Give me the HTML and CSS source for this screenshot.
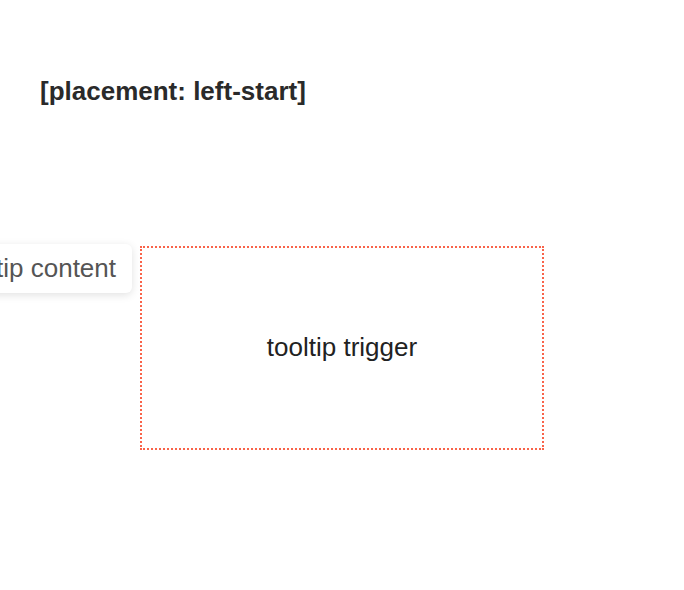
FILE: index.html
```html
<!DOCTYPE html>
<html lang="en">
<head>
<meta charset="utf-8">
<title>Tooltip placement</title>
<link rel="stylesheet" href="styles.css">
</head>
<body>
<main class="page">
  <h1 class="title">[placement: left-start]</h1>
  <div class="stage">
    <div class="trigger">
      <span class="trigger-label">tooltip trigger</span>
      <div class="tooltip">tooltip content</div>
    </div>
  </div>
</main>
</body>
</html>
```
FILE: styles.css
```css
html, body {
  margin: 0;
  padding: 0;
  background: #ffffff;
}

body {
  font-family: "Liberation Sans", Arial, sans-serif;
  color: #222222;
  overflow: hidden;
}

.page {
  padding: 76px 40px 0;
}

.title {
  margin: 0;
  font-size: 26px;
  line-height: 30px;
  font-weight: bold;
  color: #2a2a2a;
}

.stage {
  display: flex;
  justify-content: center;
  margin: 140px -40px 0;
}

.trigger {
  position: relative;
  width: 400px;
  height: 200px;
  border: 2px dotted #f9634a;
  display: flex;
  align-items: center;
  justify-content: center;
  font-size: 26px;
  line-height: 30px;
  color: #222222;
}

.trigger-label {
  margin-bottom: 2px;
}

.tooltip {
  position: absolute;
  top: -4px;
  right: calc(100% + 10px);
  padding: 8px 16px;
  font-size: 26px;
  line-height: 33px;
  color: #555555;
  background: #ffffff;
  border-radius: 6px;
  white-space: nowrap;
  box-shadow: 0 2px 8px rgba(0, 0, 0, 0.12);
}
```
